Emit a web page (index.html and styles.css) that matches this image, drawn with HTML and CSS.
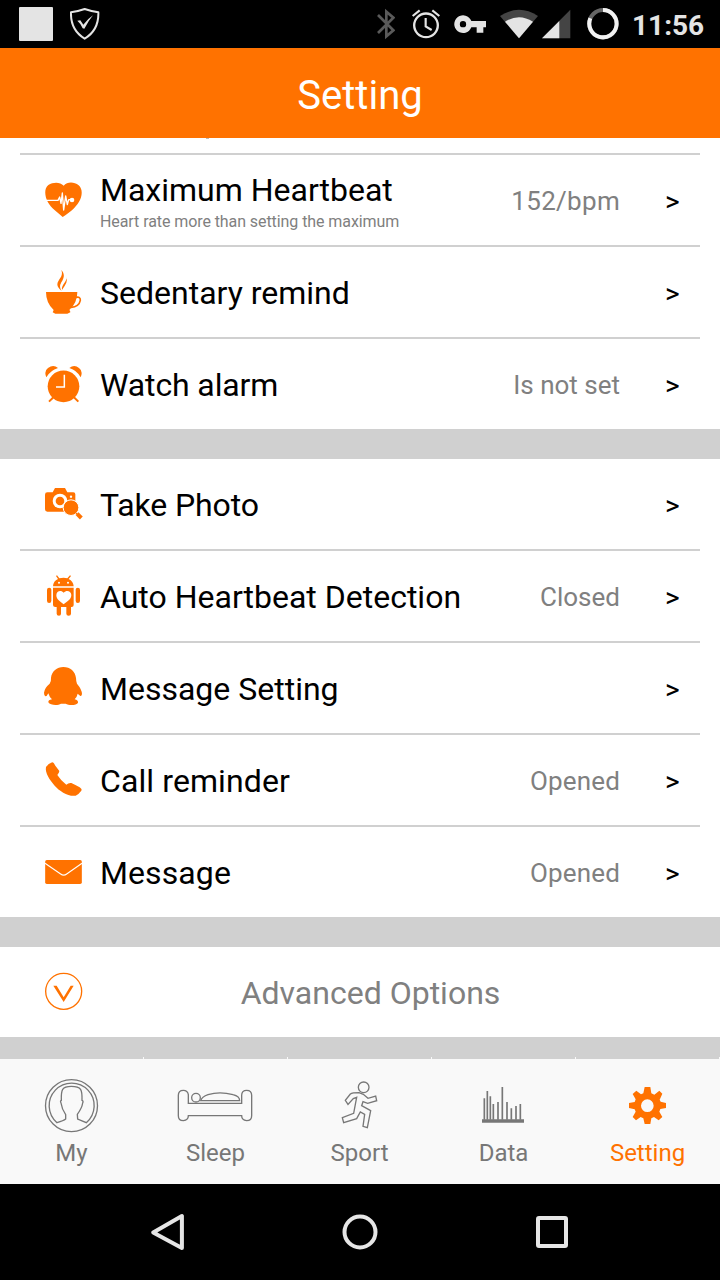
FILE: index.html
```html
<!DOCTYPE html>
<html lang="en">
<head>
    <meta charset="UTF-8">
    <meta name="viewport" content="width=device-width, initial-scale=1.0">
    <title>Setting</title>
    <link rel="stylesheet" href="styles.css">
</head>
<body>
    <div class="status">
        <div class="notif"></div>
        <svg class="shield" width="30" height="48" viewBox="0 0 90 144" fill="none" stroke="#e4e4e4">
            <path stroke-width="6" stroke-linejoin="round" d="M3 37Q24 34 44 27Q65 34 85 37Q87 90 44 116Q1 90 3 37Z"/>
            <path fill="#e4e4e4" stroke="none" d="M22 62L31 61L40 74Q54 56 69 46Q55 63 43 86L38 85Q32 70 22 62Z"/>
        </svg>
        <div class="status-right">
            <svg class="bt" width="18" height="48" viewBox="51 0 54 144" fill="none" stroke="#5a5a5a" stroke-width="8">
                <path d="M54 45L100 91L79 109V35L100 53L54 99"/>
            </svg>
            <svg class="alarm" width="30" height="48" viewBox="153 0 90 144" fill="none" stroke="#e4e4e4">
                <circle cx="198" cy="76" r="35.500" stroke-width="7"/>
                <path stroke-width="6.500" d="M197 54V79L215 90M158 48L179 31M217 31L238 48"/>
            </svg>
            <svg class="key" width="32" height="48" viewBox="282 0 96 144" fill="#e4e4e4">
                <path fill-rule="evenodd" d="M334 63H378V82H370V98H350V82H334A26.500 26.500 0 1 1 334 63ZM309 63A9.500 9.500 0 1 0 309 82A9.500 9.500 0 1 0 309 63Z"/>
            </svg>
            <svg class="wifi" width="38" height="48" viewBox="420 0 114 144">
                <path fill="#444" d="M420 48Q477 11 534 48L477 115Z"/>
                <path fill="#e4e4e4" d="M435 65Q477 38 519 65L477 115Z"/>
            </svg>
            <svg class="signal" width="29" height="48" viewBox="545 0 87 144">
                <path fill="#444" d="M545 115L630 29V115Z"/>
                <path fill="#e4e4e4" d="M545 115L597 63V115Z"/>
            </svg>
            <svg class="ring" width="32" height="48" viewBox="680 0 96 144" fill="none" stroke-width="12">
                <circle cx="728" cy="71" r="41" stroke="#666"/>
                <path stroke="#f2f2f2" d="M728 30A41 41 0 1 1 690 55"/>
            </svg>
            <span class="time">11:56</span>
        </div>
    </div>
    <div class="header">Setting</div>

    <div class="list">
        <div class="row-end"></div>
        <div class="row">
            <svg class="icon" viewBox="0 0 120 132">
                <path fill="#ff7200" d="M62 23C51 11 30 12 16 21C3 31 5 54 14 71C24 90 44 103 59 117C78 105 98 89 108 71C117 56 121 35 107 22C93 11 73 11 62 23Z"/>
                <path fill="none" stroke="#fff" stroke-width="4" stroke-linejoin="round" d="M9 67H45L50 57L54 76L58 45L62 96L68 54L73 80L77 65H88"/>
                <circle cx="87" cy="66" r="7" fill="#fff"/>
            </svg>
            <div class="name two-line">Maximum Heartbeat<p>Heart rate more than setting the maximum</p></div>
            <span class="value bpm">152/bpm</span>
            <span class="arrow">&gt;</span>
        </div>
        <div class="row">
            <svg class="icon" viewBox="0 0 120 132" fill="#ff7200">
                <path d="M55 0C63 20 44 28 43 43Q43 53 56 63Q47 51 55 37C66 21 64 10 55 0ZM69 20C75 34 54 43 57 60Q66 47 70 38Q73 28 69 20Z"/>
                <path d="M9 66H103Q103 99 79 120Q82 122 82 127L73 131H37L29 127L32 120Q9 99 9 66Z"/>
                <path fill="none" stroke="#ff7200" stroke-width="5" d="M99 82Q113 79 112 91C109 106 97 111 84 112"/>
            </svg>
            <div class="name">Sedentary remind</div>
            <span class="arrow">&gt;</span>
        </div>
        <div class="row">
            <svg class="icon" viewBox="0 0 120 132" fill="#ff7200">
                <circle cx="61.500" cy="73" r="47.500"/>
                <path d="M10 46Q2 27 15 18Q31 6 45 18Q22 25 10 46ZM113 46Q121 27 108 18Q94 6 79 18Q102 25 113 46Z"/>
                <path fill="none" stroke="#ff7200" stroke-width="6" d="M32 105L18 119M92 105L106 119"/>
                <path fill="none" stroke="#fff" stroke-width="4.500" d="M64 38V75H39"/>
            </svg>
            <div class="name snug">Watch alarm</div>
            <span class="value">Is not set</span>
            <span class="arrow">&gt;</span>
        </div>
    </div>

    <div class="list">
        <div class="row">
            <svg class="icon" viewBox="0 0 120 132" fill="#ff7200">
                <path d="M13 31H29L36 18H66L73 31H91Q97 31 97 37V89H13Q6 89 6 82V38Q6 31 13 31Z"/>
                <circle cx="51" cy="57" r="22" fill="#fff"/>
                <circle cx="51" cy="57" r="13"/>
                <circle cx="84" cy="44" r="3.500" fill="#fff"/>
                <circle cx="84" cy="77" r="23.500" stroke="#fff" stroke-width="3"/>
                <path stroke="#ff7200" stroke-width="3" d="M97 91L102 96"/>
                <path stroke="#ff7200" stroke-width="12" d="M102 95L115 108"/>
            </svg>
            <div class="name snug">Take Photo</div>
            <span class="arrow">&gt;</span>
        </div>
        <div class="row">
            <svg class="icon" viewBox="0 0 120 132" fill="#ff7200">
                <path d="M30 37Q31 21 45 15L39 6L42 4L49 13Q62 9 73 13L81 4L84 6L77 15Q91 22 92 37Z"/>
                <path d="M30 41H92V93Q92 99 86 99H84V119Q84 125 77 125Q70 125 70 119V99H54V119Q54 125 48 125Q41 125 41 119V99H37Q30 99 30 93Z"/>
                <rect x="12" y="41" width="13" height="46" rx="6.500"/>
                <rect x="98" y="41" width="13" height="46" rx="6.500"/>
                <circle cx="48" cy="26" r="3" fill="#fff"/>
                <circle cx="75" cy="26" r="3" fill="#fff"/>
                <path fill="#fff" d="M62 56C54 47 40 51 40 64C40 76 52 83 62 91C72 83 85 76 85 63C84 50 70 47 62 56Z"/>
            </svg>
            <div class="name">Auto Heartbeat Detection</div>
            <span class="value">Closed</span>
            <span class="arrow">&gt;</span>
        </div>
        <div class="row">
            <svg class="icon" viewBox="0 0 120 132" fill="#ff7200">
                <path d="M61 3C82 3 97 17 99 36Q99 45 102 53Q117 71 117 84Q116 91 112 90L104 83Q102 93 95 100Q106 103 105 110C101 119 77 119 68 113H54C45 119 21 118 16 109Q15 102 27 100Q19 93 16 82Q12 91 7 91Q3 88 3 80Q5 65 20 53Q25 45 24 36C26 16 42 3 61 3Z"/>
            </svg>
            <div class="name">Message Setting</div>
            <span class="arrow">&gt;</span>
        </div>
        <div class="row">
            <svg class="icon" viewBox="0 0 120 132" fill="#ff7200">
                <path d="M9 27Q16 16 28 13Q33 14 37 23L49 39Q49 44 43 51Q53 67 70 80Q76 74 85 75Q97 80 110 88Q118 94 115 98Q108 108 98 113C77 117 49 99 35 83C21 67 5 44 9 27Z"/>
            </svg>
            <div class="name loose">Call reminder</div>
            <span class="value opened">Opened</span>
            <span class="arrow">&gt;</span>
        </div>
        <div class="row">
            <svg class="icon" viewBox="0 0 120 132">
                <rect x="6.500" y="30" width="110" height="72" rx="5" fill="#ff7200"/>
                <path fill="none" stroke="#fff" stroke-width="3.500" d="M6 40L53 72Q62 79 71 72L117 40"/>
            </svg>
            <div class="name loose">Message</div>
            <span class="value opened">Opened</span>
            <span class="arrow">&gt;</span>
        </div>
    </div>

    <div class="list">
        <div class="row advanced">
            <svg class="icon" viewBox="0 0 120 132">
                <circle cx="62" cy="64" r="54" fill="none" stroke="#ff7200" stroke-width="4"/>
                <path fill="#ff7200" d="M31 47H41L62 82L83 47H92L62 96Z"/>
            </svg>
            <span>Advanced Options</span>
        </div>
    </div>

    <div class="tabs">
        <div class="tab">
            <svg viewBox="0 0 240 168">
                <circle cx="118.500" cy="86" r="78"/>
                <path d="M75 137A67.500 67.500 0 1 1 163 137L137 126L136 112Q150 93 152 78Q155 72 150 70C151 38 148 28 118 28C90 28 87 38 88 70Q84 72 87 78Q90 98 101 113V126Q95 131 75 137Z"/>
            </svg>
            <span>My</span>
        </div>
        <div class="tab">
            <svg viewBox="0 0 240 168">
                <path d="M37 79V53Q35 40 22 40Q7 40 7 55V116Q7 131 22 131Q37 129 37 116H197Q197 129 212 131Q227 131 227 116V55Q227 40 212 40Q197 40 197 55V79Z"/>
                <circle cx="60" cy="62" r="13"/>
                <path d="M74 71Q78 59 96 53Q131 42 171 53Q191 58 191 71Z"/>
            </svg>
            <span>Sleep</span>
        </div>
        <div class="tab">
            <svg viewBox="0 0 240 168">
                <circle cx="131" cy="31" r="16"/>
                <path d="M117 47Q97 47 91 51L76 70L84 82L100 65L110 61L101 109L67 122L71 137L110 125L121 105L134 112L129 148L142 152L152 101L125 86L129 74L143 79L170 71L167 57L144 64L130 52Z"/>
            </svg>
            <span>Sport</span>
        </div>
        <div class="tab">
            <svg viewBox="0 0 240 168">
                <path stroke-width="5" d="M61 64V128M70 42V128M79 58V128M88 81V128M102 75V128M115 30V128M129 75V128M142 94V128M156 87V128M169 81V128"/>
                <path stroke-width="11" d="M54 132H180"/>
            </svg>
            <span>Data</span>
        </div>
        <div class="tab active">
            <svg viewBox="0 0 240 168">
                <path class="gear" fill-rule="evenodd" d="M110 30H127L130 49L139 53L154 41L163 50L155 68L158 74L174 78V93L157 96L154 104L163 120L152 130L138 120L130 124L127 141H110L106 124L98 120L84 130L74 120L83 104L80 97L63 93V78L80 75L83 67L74 51L85 41L99 52L106 49ZM118 67A19 19 0 1 0 118 105A19 19 0 1 0 118 67Z"/>
            </svg>
            <span>Setting</span>
        </div>
    </div>

    <div class="navbar">
        <svg width="48" height="48" viewBox="0 0 48 48"><path d="M38.200 7.500V39.500L9.500 24Z" transform="translate(-.3 .5)"/></svg>
        <svg width="48" height="48" viewBox="0 0 48 48"><circle cx="24" cy="24" r="15.500"/></svg>
        <svg width="48" height="48" viewBox="0 0 48 48"><rect x="10" y="10" width="28" height="28" rx="1"/></svg>
    </div>
</body>
</html>
```
FILE: styles.css
```css
*{
    box-sizing: border-box;
    margin: 0;
    padding: 0;
}
body{
    width: 720px;
    height: 1280px;
    overflow: hidden;
    display: flex;
    flex-direction: column;
    background: #d0d0d0;
    font-family: Roboto, "Liberation Sans", sans-serif;
}
svg{
    display: block;
    flex: none;
}
.status{
    height: 48px;
    background: #000;
    display: flex;
    align-items: center;
    padding: 0 15px 0 19px;
}
.notif{
    width: 34px;
    height: 34px;
    background: #e4e4e4;
    border-radius: 1px;
}
.shield{
    margin-left: 17px;
}
.status-right{
    display: flex;
    align-items: center;
    margin-left: auto;
}
.alarm{
    margin-left: 16px;
}
.key{
    margin-left: 13px;
}
.wifi{
    margin-left: 14px;
}
.signal{
    margin-left: 4px;
}
.ring{
    margin-left: 16px;
}
.time{
    width: 73px;
    margin-left: 13px;
    color: #e4e4e4;
    font-size: 28px;
    font-weight: bold;
    line-height: 46px;
    padding-top: 4px;
    white-space: nowrap;
}
.header{
    height: 90px;
    line-height: 96px;
    background: #ff7200;
    color: #fff;
    font-size: 40px;
    text-align: center;
}
.list{
    background: #fff;
    margin-bottom: 30px;
}
/* bottom of the row scrolled under the header */
.row-end{
    height: 15px;
    padding-left: 206px;
}
.row-end::before{
    content: "";
    display: block;
    width: 3px;
    height: 1px;
    background: #bbb;
}
.row{
    height: 90px;
    display: flex;
    align-items: center;
    padding: 0 40px 0 43px;
}
.row + .row,
.row-end + .row{
    height: 92px;
    padding-top: 2px;
    background: linear-gradient(#d0d0d0, #d0d0d0) 20px 0 / 680px 2px no-repeat;
}
.icon{
    width: 40px;
    height: 44px;
}
.name{
    flex: 1;
    margin-left: 17px;
    padding-top: 2px;
    font-size: 32px;
    line-height: 38px;
    color: #000;
    white-space: nowrap;
}
.name p{
    font-size: 16px;
    line-height: 19px;
    margin-top: 3px;
    letter-spacing: -0.08px;
    color: #808080;
}
.two-line{
    padding-top: 1px;
}
.snug{
    letter-spacing: -0.12px;
}
.loose{
    letter-spacing: 0.1px;
}
.value{
    padding-top: 2px;
    font-size: 26px;
    color: #808080;
}
.bpm{
    letter-spacing: 0.3px;
}
.opened{
    letter-spacing: 0.15px;
}
.arrow{
    width: 16px;
    margin-left: 45px;
    margin-right: -1px;
    padding-top: 3px;
    font-size: 28px;
    color: #000;
}
.advanced span{
    flex: 1;
    padding: 2px 22px 0 0;
    text-align: center;
    font-size: 32px;
    color: #808080;
}
.tabs{
    height: 127px;
    margin-top: -10px;
    display: flex;
    background: linear-gradient(transparent 2px, #f9f9f9 2px);
}
.tab{
    width: 144px;
    padding-top: 20px;
    display: flex;
    flex-direction: column;
    align-items: center;
    font-size: 24px;
    line-height: 30px;
    color: #777;
    background: linear-gradient(#f9f9f9, #f9f9f9) 100% 0 / 1px 2px no-repeat;
}
.tab svg{
    width: 80px;
    height: 56px;
    fill: none;
    stroke: #777;
    stroke-width: 4;
}
.tab span{
    margin-top: 5px;
    padding-right: 1px;
}
.active{
    color: #ff7200;
}
.tab .gear{
    fill: #ff7200;
    stroke: none;
}
.navbar{
    height: 96px;
    background: #000;
    display: flex;
    align-items: center;
    justify-content: space-between;
    padding: 0 144px;
}
.navbar svg{
    fill: none;
    stroke: #e6e6e6;
    stroke-width: 4;
    stroke-linejoin: round;
}
```
